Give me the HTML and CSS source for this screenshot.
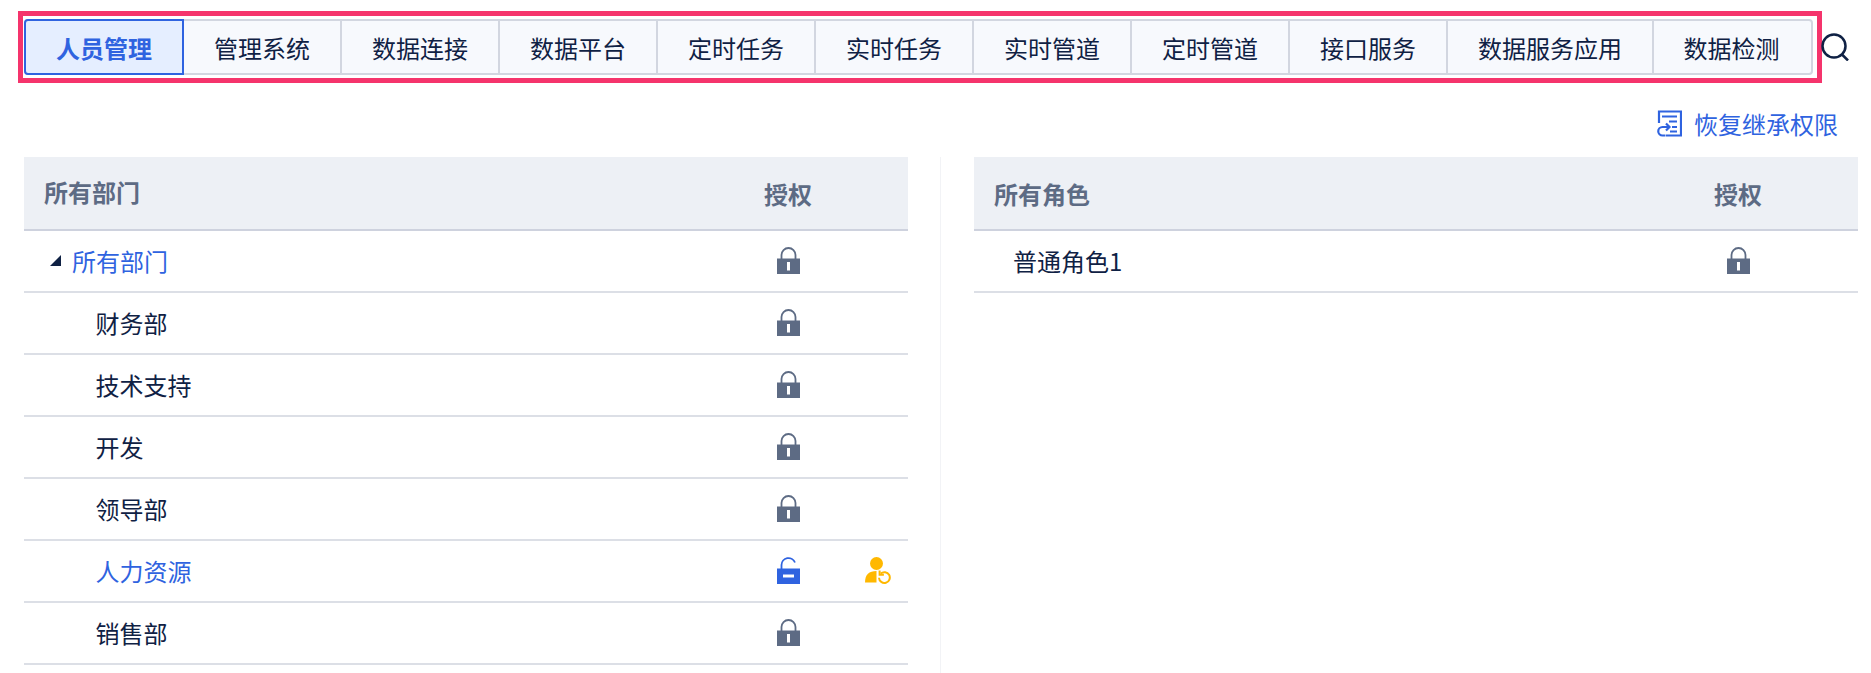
FILE: index.html
```html
<!DOCTYPE html>
<html lang="zh-CN">
<head>
  <meta charset="UTF-8">
  <meta name="viewport" content="width=device-width, initial-scale=1.0">
  <title>权限配置</title>
  <link rel="stylesheet" href="styles.css">
</head>
<body>

  <svg class="defs" width="0" height="0">
    <symbol id="lock" viewBox="0 0 23 27">
      <path d="M4.500 12V8a7 7 0 0 1 14 0V12" fill="none" stroke="currentColor" stroke-width="1.800"/>
      <path d="M0 11.500h23V27H0z" fill="currentColor"/>
      <path d="M10 15h3v8.500h-3z" fill="#fff"/>
    </symbol>
  </svg>

  <div class="top">
    <div class="tabs-box">
      <div class="tabs">
        <div class="tab active">人员管理</div>
        <div class="tab">管理系统</div>
        <div class="tab">数据连接</div>
        <div class="tab">数据平台</div>
        <div class="tab">定时任务</div>
        <div class="tab">实时任务</div>
        <div class="tab">实时管道</div>
        <div class="tab">定时管道</div>
        <div class="tab">接口服务</div>
        <div class="tab wide">数据服务应用</div>
        <div class="tab last">数据检测</div>
      </div>
    </div>
    <svg class="search" viewBox="0 0 28 28">
      <circle cx="13" cy="13" r="11.500" fill="none" stroke="#0f2144" stroke-width="2.500"/>
      <path d="M21 21.500l6 6" fill="none" stroke="#0f2144" stroke-width="2.500"/>
    </svg>
  </div>

  <div class="actions">
    <a class="restore">
      <svg viewBox="0 0 26 27">
        <path d="M3 13V1.500h22v24H10" fill="none" stroke="currentColor" stroke-width="2.200"/>
        <path d="M6 6.500h15M13 11.500h8M16 17h5M14 21.500h7" fill="none" stroke="currentColor" stroke-width="2"/>
        <path d="M13 17H6.500a4.200 4.200 0 0 0 0 8.500h3M10 13.500l3.500 3.500-3.500 3.500" fill="none" stroke="currentColor" stroke-width="2.200"/>
      </svg>
      恢复继承权限
    </a>
  </div>

  <div class="panels">
    <div class="panel">
      <div class="row head">
        <span class="title">所有部门</span>
        <span class="auth">授权</span>
      </div>
      <div class="row">
        <span class="root"><i class="arrow"></i><span class="blue">所有部门</span></span>
        <svg class="lock"><use href="#lock"/></svg>
      </div>
      <div class="row"><span class="child">财务部</span><svg class="lock"><use href="#lock"/></svg></div>
      <div class="row"><span class="child">技术支持</span><svg class="lock"><use href="#lock"/></svg></div>
      <div class="row"><span class="child">开发</span><svg class="lock"><use href="#lock"/></svg></div>
      <div class="row"><span class="child">领导部</span><svg class="lock"><use href="#lock"/></svg></div>
      <div class="row">
        <span class="child blue">人力资源</span>
        <svg class="lock" viewBox="0 0 23 27">
          <path d="M4.500 12V8a7 7 0 0 1 13.500-2.500" fill="none" stroke="#2f63e0" stroke-width="1.800"/>
          <path d="M0 11.500h23V27H0z" fill="#2f63e0"/>
          <path d="M6 17.500h11v3H6z" fill="#fff"/>
        </svg>
        <svg class="reset" viewBox="0 0 26 27">
          <circle cx="11.500" cy="6.500" r="6.500" fill="#ffb800"/>
          <path d="M0 25.500c0-8 4-11.500 11.500-11.500V25.500z" fill="#ffb800"/>
          <path d="M15.700 16.600A5.400 5.400 0 1 1 14 20.800" fill="none" stroke="#ffb800" stroke-width="2"/>
          <path d="M14.600 13.500v4.300h4.300" fill="none" stroke="#ffb800" stroke-width="2"/>
        </svg>
      </div>
      <div class="row"><span class="child">销售部</span><svg class="lock"><use href="#lock"/></svg></div>
    </div>

    <div class="panel">
      <div class="row head">
        <span>所有角色</span>
        <span class="auth">授权</span>
      </div>
      <div class="row"><span class="role">普通角色1</span><svg class="lock"><use href="#lock"/></svg></div>
    </div>
  </div>

</body>
</html>
```

FILE: styles.css
```css
body {
  margin: 0;
  padding: 11px 13px 0 18px;
  height: 673px;
  box-sizing: border-box;
  overflow: hidden;
  background: #fff;
  color: #0f2144;
  font-family: "Noto Sans CJK SC", "Noto Sans", sans-serif;
  font-size: 24px;
}

.defs {
  position: absolute;
}

.top {
  display: flex;
  align-items: center;
}

.tabs-box {
  border: 5px solid #f5346c;
  padding: 3px 4px 3px 1px;
  width: 1804px;
  box-sizing: border-box;
}

.tabs {
  display: flex;
  height: 56px;
  box-sizing: border-box;
  border: 2px solid #d2d6e0;
  border-radius: 4px;
  background: #f7f9fd;
}

.tab {
  flex: 0 0 158px;
  display: flex;
  align-items: center;
  justify-content: center;
  border-left: 2px solid #d2d6e0;
  box-sizing: border-box;
}

.tab.wide {
  flex-basis: 206px;
}

.tab.last {
  flex: 1;
  padding-right: 2px;
}

.tab.active {
  flex-basis: 160px;
  margin: -2px;
  position: relative;
  z-index: 1;
  border: 2px solid #2f63e0;
  border-radius: 4px 0 0 4px;
  background: #e5eeff;
  color: #2f63e0;
  font-weight: 700;
}

.search {
  width: 28px;
  height: 28px;
  margin-left: -1px;
}

.actions {
  display: flex;
  justify-content: flex-end;
  padding: 20px 20px 0 0;
  height: 74px;
  box-sizing: border-box;
}

.restore {
  display: flex;
  align-items: center;
  gap: 12px;
  height: 40px;
  color: #2f63e0;
}

.restore svg {
  width: 26px;
  height: 27px;
}

.panels {
  display: flex;
  padding-left: 6px;
}

.panel {
  width: 884px;
}

.panel + .panel {
  margin-left: 66px;
  position: relative;
}

/* faint line between the two tables */
.panel + .panel::before {
  content: "";
  position: absolute;
  left: -34px;
  top: 0;
  height: 520px;
  width: 1px;
  background: #f2f3f6;
}

.row {
  display: grid;
  grid-template-columns: 1fr 48px 96px;
  align-items: center;
  justify-items: center;
  height: 62px;
  padding-bottom: 2px;
  box-sizing: border-box;
  border-bottom: 2px solid #dcdfe6;
}

.row > :first-child {
  justify-self: start;
}

.row.head {
  height: 74px;
  padding: 0 0 0 20px;
  background: #edf0f5;
  border-bottom-color: #ced2de;
  color: #5d6b84;
  font-weight: 700;
}

.title {
  margin-bottom: 4px;
}

.lock {
  width: 23px;
  height: 27px;
  color: #5d6b84;
  grid-column: 2;
}

.reset {
  width: 26px;
  height: 27px;
  justify-self: start;
  margin-left: 53px;
}

.root {
  display: flex;
  align-items: center;
  padding-left: 26px;
  gap: 11px;
}

.arrow {
  width: 0;
  height: 0;
  border-left: 11px solid transparent;
  border-bottom: 11px solid #0f2144;
}

.child {
  padding-left: 71.500px;
}

.role {
  padding-left: 39px;
}

.blue {
  color: #2f63e0;
}
```
